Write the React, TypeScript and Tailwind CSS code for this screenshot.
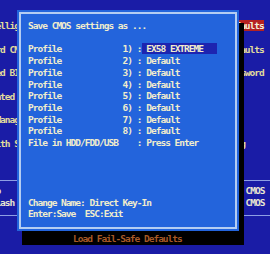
const leftItems = [
  "MB Intelligent Tweaker(M.I.T.)",
  "Standard CMOS Features",
  "Advanced BIOS Features",
  "Integrated Peripherals",
  "Power Management Setup",
  "PC Health Status",
];

const rightItems = [
  "Load Fail-Safe Defaults",
  "Load Optimized Defaults",
  "Set Supervisor Password",
  "Set User Password",
  "Save & Exit Setup",
  "Exit Without Saving",
];

const profiles = [
  { n: "1)", value: "EX58 EXTREME", selected: true },
  { n: "2)", value: "Default" },
  { n: "3)", value: "Default" },
  { n: "4)", value: "Default" },
  { n: "5)", value: "Default" },
  { n: "6)", value: "Default" },
  { n: "7)", value: "Default" },
  { n: "8)", value: "Default" },
];

export default function App() {
  return (
    <div className="relative h-[254px] w-[270px] overflow-hidden bg-[#1a1ca6] font-['DejaVu_Sans_Mono','Liberation_Mono',monospace] text-[9.5px] font-bold leading-[12px] tracking-[-0.99px]">
      <MainMenu />
      <SaveDialog />
    </div>
  );
}

function MainMenu() {
  return (
    <div className="ml-[-33px] pt-[20px]">
      {leftItems.map((item, i) => (
        <div key={item} className="grid h-[23.5px] grid-cols-[188px_1fr]">
          <div className="whitespace-pre text-[#e2dd9c]">{item}</div>
          <div className="whitespace-pre">
            <span
              className={
                i === 0 ? "bg-[#b52222] text-[#f3efd8]" : "text-[#e2dd9c]"
              }
            >
              {rightItems[i]}
            </span>
          </div>
        </div>
      ))}

      <div className="mt-[19px] h-px bg-[#8e9ee4]" />
      <div className="mt-[4px] grid grid-cols-[188px_1fr] text-[#e8e6d0]">
        <div className="whitespace-pre">F1:Help</div>
        <div className="whitespace-pre pl-[48px]">F11:Save CMOS</div>
        <div className="whitespace-pre">F8:Q-Flash</div>
        <div className="whitespace-pre pl-[48px]">F12:Load CMOS</div>
      </div>
      <div className="mt-[6px] h-px bg-[#8e9ee4]" />
    </div>
  );
}

function SaveDialog() {
  return (
    <div className="absolute left-[17px] top-[10px]">
      <div className="flex">
        <div className="h-[221px] w-[222px] bg-[#2364dc] p-[2px]">
          <div className="flex h-full flex-col border-2 border-[#b4cdf2] pb-[7px] pl-[7px] pt-[6px] leading-[11.7px] text-[#f1edcc]">
            <div className="whitespace-pre">Save CMOS settings as ...</div>
            <div className="mt-[11.7px]">
              {profiles.map((p) => (
                <div key={p.n} className="whitespace-pre">
                  {"Profile             "}
                  {p.n}
                  {" :"}
                  <span className={p.selected ? "bg-[#1d24b0]" : ""}>
                    {" " + p.value + (p.selected ? "   " : "")}
                  </span>
                </div>
              ))}
              <div className="whitespace-pre">
                {"File in HDD/FDD/USB    : Press Enter"}
              </div>
            </div>
            <div className="mt-auto whitespace-pre">Change Name: Direct Key-In</div>
            <div className="whitespace-pre">Enter:Save  ESC:Exit</div>
          </div>
        </div>
        <div className="mt-[13px] w-[5px] bg-black" />
      </div>
      <div className="ml-[5px] h-[14px] w-[222px] bg-black pl-[51px] pt-[2px] text-[#a85a26]">
        Load Fail-Safe Defaults
      </div>
    </div>
  );
}
